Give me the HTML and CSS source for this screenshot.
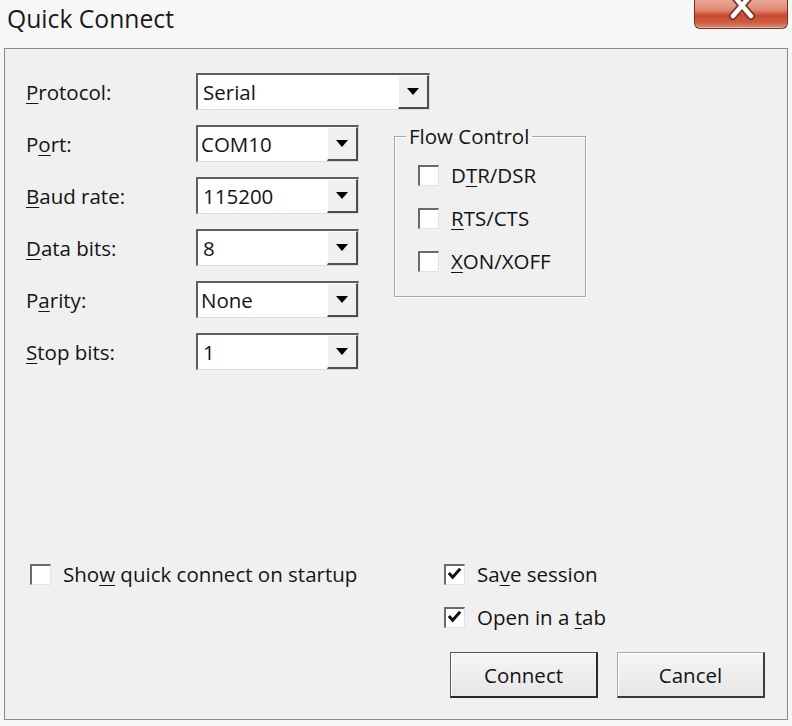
FILE: index.html
```html
<!DOCTYPE html>
<html lang="en">
<head>
    <meta charset="UTF-8">
    <meta name="viewport" content="width=device-width, initial-scale=1.0">
    <title>Quick Connect</title>
    <link rel="stylesheet" href="styles.css">
</head>
<body>

    <!-- Title Bar -->
    <div class="titlebar">
        <span class="title">Quick Connect</span>
        <div class="close">
            <svg width="92" height="28" viewBox="0 0 92 28">
                <path d="M38 -5 L56 16 M56 -5 L38 16" stroke="#7b3324" stroke-width="8" stroke-linecap="round"/>
                <path d="M38 -5 L56 16 M56 -5 L38 16" stroke="#ffffff" stroke-width="4.5" stroke-linecap="round"/>
            </svg>
        </div>
    </div>

    <!-- Dialog Body -->
    <div class="panel">
        <div class="row">
            <span class="label"><u>P</u>rotocol:</span>
            <div class="combo combo-wide">
                <span class="value">Serial</span>
                <span class="drop"><span class="arrow"></span></span>
            </div>
        </div>

        <div class="settings">
            <div class="fields">
                <div class="row">
                    <span class="label">P<u>o</u>rt:</span>
                    <div class="combo">
                        <span class="value value-tight">COM10</span>
                        <span class="drop"><span class="arrow"></span></span>
                    </div>
                </div>
                <div class="row">
                    <span class="label"><u>B</u>aud rate:</span>
                    <div class="combo">
                        <span class="value">115200</span>
                        <span class="drop"><span class="arrow"></span></span>
                    </div>
                </div>
                <div class="row">
                    <span class="label"><u>D</u>ata bits:</span>
                    <div class="combo">
                        <span class="value">8</span>
                        <span class="drop"><span class="arrow"></span></span>
                    </div>
                </div>
                <div class="row">
                    <span class="label">P<u>a</u>rity:</span>
                    <div class="combo">
                        <span class="value value-tight">None</span>
                        <span class="drop"><span class="arrow"></span></span>
                    </div>
                </div>
                <div class="row">
                    <span class="label"><u>S</u>top bits:</span>
                    <div class="combo">
                        <span class="value">1</span>
                        <span class="drop"><span class="arrow"></span></span>
                    </div>
                </div>
            </div>

            <fieldset class="group">
                <legend>Flow Control</legend>
                <div class="option"><span class="check"></span><span>D<u>T</u>R/DSR</span></div>
                <div class="option"><span class="check"></span><span><u>R</u>TS/CTS</span></div>
                <div class="option"><span class="check"></span><span><u>X</u>ON/XOFF</span></div>
            </fieldset>
        </div>

        <div class="footer">
            <div class="footer-left">
                <div class="option"><span class="check"></span><span>Sho<u>w</u> quick connect on startup</span></div>
            </div>
            <div class="footer-right">
                <div class="option">
                    <span class="check">
                        <svg width="19" height="19" viewBox="0 0 19 19"><path d="M3 8 L7 12.5 L15 3.5" fill="none" stroke="#111" stroke-width="3.2"/></svg>
                    </span>
                    <span>Sa<u>v</u>e session</span>
                </div>
                <div class="option">
                    <span class="check">
                        <svg width="19" height="19" viewBox="0 0 19 19"><path d="M3 8 L7 12.5 L15 3.5" fill="none" stroke="#111" stroke-width="3.2"/></svg>
                    </span>
                    <span>Open in a <u>t</u>ab</span>
                </div>
                <div class="buttons">
                    <button class="btn btn-default">Connect</button>
                    <button class="btn">Cancel</button>
                </div>
            </div>
        </div>
    </div>

</body>
</html>
```

FILE: styles.css
```css
/* Global Styles */
body {
    margin: 0;
    padding: 0;
    width: 792px;
    height: 726px;
    background: #f7f7f7;
    font-family: 'Open Sans', sans-serif;
    font-size: 20.5px;
    color: #141414;
    overflow: hidden;
}

u {
    text-decoration-thickness: 1px;
    text-underline-offset: 3px;
}

/* Title Bar */
.titlebar {
    height: 48px;
    display: flex;
    justify-content: space-between;
    align-items: flex-start;
}

.title {
    font-size: 24.7px;
    line-height: 33px;
    margin: 2px 0 0 7px;
    color: #1a1a1a;
}

.close {
    width: 92px;
    height: 28px;
    margin-right: 4px;
    border: 1px solid #6e3226;
    border-top: none;
    border-radius: 0 0 6px 6px;
    background: linear-gradient(#eaa898 0%, #e08a74 35%, #c9492e 55%, #cf5d42 80%, #dc8a70 100%);
    box-shadow: inset 0 -1px 0 rgba(255, 255, 255, 0.4);
    overflow: hidden;
}

.close svg {
    display: block;
}

/* Dialog Body */
.panel {
    height: 672px;
    margin: 0 4px;
    box-sizing: border-box;
    border: 1px solid #8c8c8c;
    background: #f0f0f0;
    padding: 24px 22px 21px 21px;
    display: flex;
    flex-direction: column;
}

.row {
    display: flex;
    align-items: center;
    height: 37px;
}

.label {
    width: 170px;
    flex-shrink: 0;
}

/* Combo Boxes */
.combo {
    width: 163px;
    height: 37px;
    box-sizing: border-box;
    display: flex;
    background: #fff;
    border-style: solid;
    border-width: 2px 1px 1px 2px;
    border-color: #5e5e5e #dcdcdc #dcdcdc #5e5e5e;
}

.combo-wide {
    width: 234px;
}

.value {
    flex: 1;
    padding-left: 5px;
    line-height: 34px;
}

.value-tight {
    padding-left: 3px;
}

.drop {
    width: 31px;
    box-sizing: border-box;
    background: #f0f0f0;
    border-right: 2px solid #4e4e4e;
    border-bottom: 2px solid #4e4e4e;
    border-top: 1px solid #fff;
    border-left: 1px solid #fff;
    display: flex;
    align-items: center;
    justify-content: center;
}

.arrow {
    width: 0;
    height: 0;
    border-left: 6px solid transparent;
    border-right: 6px solid transparent;
    border-top: 7px solid #000;
}

/* Port Settings + Flow Control */
.settings {
    display: flex;
    align-items: flex-start;
    margin-top: 15px;
}

.fields {
    display: flex;
    flex-direction: column;
    gap: 15px;
}

.group {
    width: 192px;
    height: 172px;
    box-sizing: border-box;
    margin: 0 0 0 35px;
    padding: 0 8px 0 11px;
    border: 1px solid #a6a6a6;
    box-shadow: inset 1px 1px 0 #fff, 1px 1px 0 #fff;
}

.group legend {
    padding: 0 3px;
    line-height: 22px;
}

.group .option {
    margin: 0 0 21px 12px;
}

.group .option:first-of-type {
    margin-top: 17px;
}

/* Checkboxes */
.option {
    display: flex;
    align-items: center;
    height: 22px;
    gap: 12px;
    white-space: nowrap;
}

.check {
    width: 21px;
    height: 21px;
    box-sizing: border-box;
    flex-shrink: 0;
    background: #fff;
    border-style: solid;
    border-width: 2px 1px 1px 2px;
    border-color: #6a6a6a #e2e2e2 #e2e2e2 #6a6a6a;
    display: flex;
    align-items: center;
    justify-content: center;
}

.check svg {
    display: block;
}

/* Footer */
.footer {
    margin-top: auto;
    display: flex;
    align-items: flex-start;
}

.footer-left {
    padding-left: 4px;
}

.footer-right {
    margin-left: auto;
    width: 321px;
    display: flex;
    flex-direction: column;
    gap: 21px;
}

.buttons {
    display: flex;
    justify-content: flex-end;
    gap: 19px;
    margin-top: 3px;
}

.btn {
    width: 148px;
    height: 46px;
    font-family: inherit;
    font-size: 20.5px;
    color: #141414;
    background: linear-gradient(#f6f6f6, #e6e6e6);
    border-style: solid;
    border-width: 1px 2px 2px 1px;
    border-color: #a8a8a8 #3c3c3c #3c3c3c #a8a8a8;
    box-shadow: inset 1px 1px 0 #fff;
    padding: 0;
}

.btn-default {
    border-color: #5a5a5a #2a2a2a #2a2a2a #5a5a5a;
}
```
